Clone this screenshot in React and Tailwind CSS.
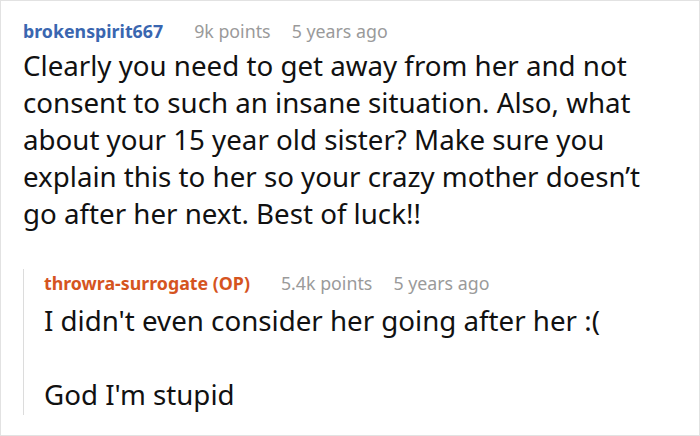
export default function App() {
  return (
    <div className="w-[700px] h-[436px] bg-white border border-[#e2e2e2] overflow-hidden" style={{ fontFamily: "'Noto Sans', 'Open Sans', sans-serif" }}>
      <div className="pl-[22px] pr-[26px] pt-[16px]">
        <div className="flex items-baseline text-[17.8px] leading-[28px]">
          <span className="font-bold text-[#3a66b0] mr-[31px]">brokenspirit667</span>
          <span className="text-[#9a9a9a] mr-[21px]">9k points</span>
          <span className="text-[#9a9a9a]">5 years ago</span>
        </div>
        <p className="text-[27.7px] leading-[37px] text-[#111] mt-[2px]">
          Clearly you need to get away from her and not consent to such an insane situation. Also, what about your 15 year old sister? Make sure you explain this to her so your crazy mother doesn’t go after her next. Best of luck!!
        </p>
        <div className="mt-[48px] border-l border-[#dcdcdc] pl-[20px] pb-[2px]">
          <div className="flex items-baseline text-[17.8px] leading-[28px] -mt-[11px]">
            <span className="font-bold text-[#d5541f] mr-[31px]">throwra-surrogate (OP)</span>
            <span className="text-[#9a9a9a] mr-[21px]">5.4k points</span>
            <span className="text-[#9a9a9a]">5 years ago</span>
          </div>
          <div className="text-[27.7px] leading-[37px] text-[#111] mt-[5px]">
            <p>I didn't even consider her going after her :(</p>
            <p>&nbsp;</p>
            <p>God I'm stupid</p>
          </div>
        </div>
      </div>
    </div>
  );
}
